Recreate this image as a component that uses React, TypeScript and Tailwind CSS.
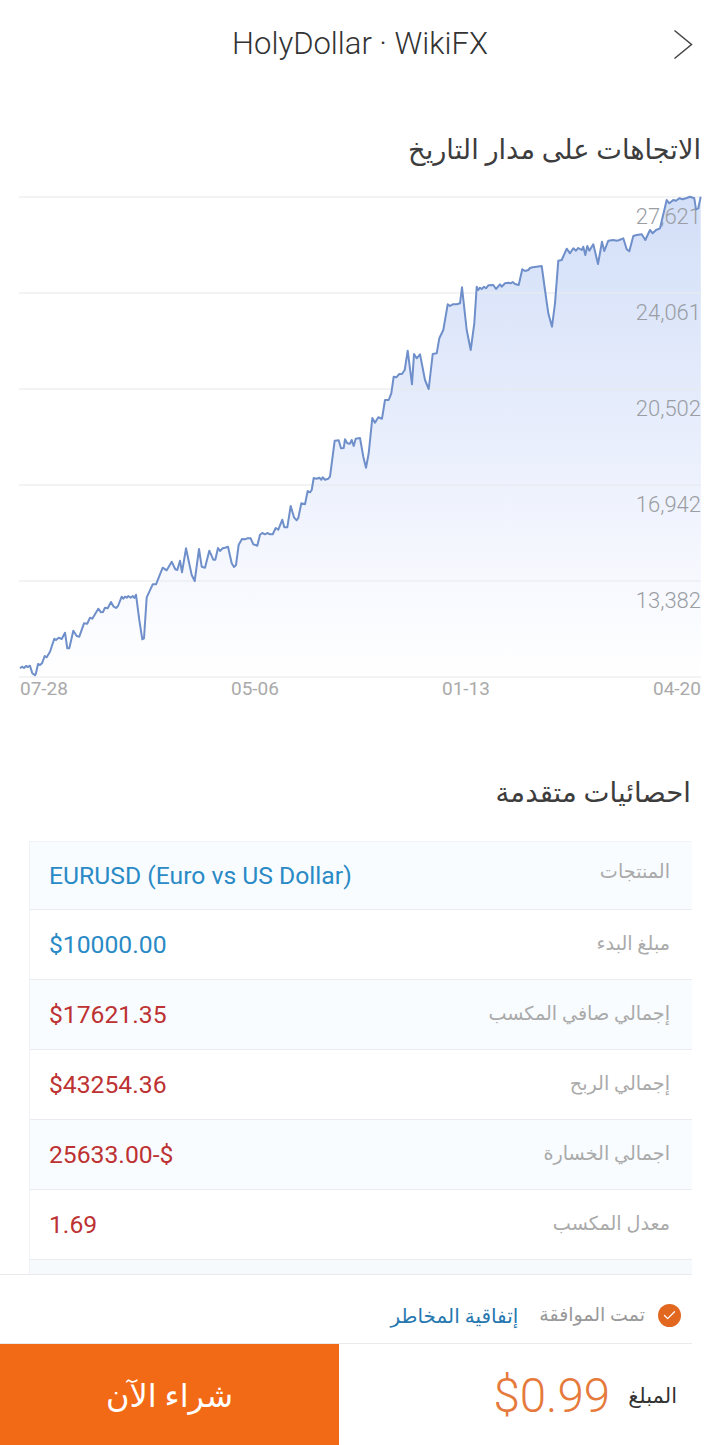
import { Check } from 'lucide-react'

// chart line traced from the picture, three crops at 3x
const crop1 = [[60,685],[66,680],[72,684],[78,678],[84,681],[90,677],[97,700],[105,706],[108,700],[114,672],[120,675],[126,670],[134,648],[140,652],[150,635],[163,596],[168,600],[176,593],[185,597],[195,578],[202,625],[208,625],[220,572],[230,588],[238,590],[252,550],[262,551],[270,533],[277,536],[295,506],[303,517],[309,516],[315,503],[323,505],[333,486],[341,500],[348,504],[354,498],[365,470],[370,476],[375,470],[380,473],[385,468],[392,473],[398,468],[403,474],[408,464],[418,540],[427,598],[432,595],[440,472],[458,433],[468,433],[488,383],[500,391],[515,365],[526,388],[532,390],[540,362],[546,397],[558,325],[575,405],[584,423],[597,327],[605,380],[615,383],[628,332],[640,359],[646,359],[654,324],[660,333],[668,325],[675,323],[684,320],[695,370],[702,381],[708,375],[716,314],[726,297],[735,298],[742,295],[752,295],[760,313],[772,317],[780,284],[787,279],[795,283],[802,279],[810,283],[818,283],[827,264],[835,269],[847,239],[853,262],[862,262],[872,198],[882,232],[890,241],[895,234],[904,190],[915,193],[923,153],[930,157],[935,150],[941,114],[950,116],[958,113],[964,119],[968,112],[975,119],[985,116],[990,110]]
const crop2 = [[134,242],[146,241],[153,265],[161,264],[165,238],[172,250],[180,251],[185,240],[191,258],[197,236],[210,234],[220,290],[228,323],[236,280],[247,174],[255,188],[265,172],[276,176],[285,120],[296,120],[304,100],[311,50],[319,52],[328,42]]
const crop3 = [[126,552],[134,540],[143,482],[156,583],[162,492],[170,505],[180,493],[195,570],[206,597],[218,492],[230,490],[238,445],[250,420],[263,343],[270,348],[278,343],[290,343],[300,340],[306,292],[320,420],[332,480],[343,400],[350,290],[355,300],[360,293],[365,297],[372,290],[378,295],[385,286],[400,285],[408,297],[420,283],[425,290],[435,280],[445,278],[452,280],[458,276],[465,282],[476,285],[487,238],[495,243],[505,240],[510,234],[518,232],[530,230],[545,228],[555,300],[565,370],[576,410],[585,340],[595,212],[605,210],[620,176],[630,190],[640,175],[648,182],[655,174],[665,180],[670,170],[676,195],[682,168],[688,182],[700,163],[714,222],[726,155],[733,183],[745,152],[760,150],[770,152],[778,150],[790,145],[800,178],[808,184],[820,138],[830,135],[845,133],[856,150],[870,120],[878,130],[888,120],[900,115],[920,30],[928,40],[940,30],[948,32],[958,25],[968,28],[980,24],[990,20],[1003,25],[1008,58],[1015,55],[1022,20]]

const points = [
  ...crop1.map(([x, y]) => [x / 3, 440 + y / 3]),
  ...crop2.map(([x, y]) => [290 + x / 3, 360 + y / 3]),
  ...crop3.map(([x, y]) => [360 + x / 3, 190 + y / 3]),
]
const linePath = points.map(([x, y]) => `${x.toFixed(1)},${y.toFixed(1)}`).join(' ')
const areaPath = `20,677 ${linePath} 701,677`

const gridLines = [197, 293, 389, 485, 581, 677]
const yLabels = [
  { y: 224, text: '27,621' },
  { y: 320, text: '24,061' },
  { y: 416, text: '20,502' },
  { y: 512, text: '16,942' },
  { y: 608, text: '13,382' },
]

const rows = [
  { label: 'المنتجات', value: 'EURUSD (Euro vs US Dollar)', color: 'text-[#2a8ac6]', bg: 'bg-[#f8fcff]', h: 'h-[68px]', labelCls: 'mb-[7px]' },
  { label: 'مبلغ البدء', value: '$10000.00', color: 'text-[#2a8ac6]', bg: 'bg-white', h: 'h-[70px]', labelCls: '' },
  { label: 'إجمالي صافي المكسب', value: '$17621.35', color: 'text-[#bd3232]', bg: 'bg-[#f8fcff]', h: 'h-[70px]', labelCls: '' },
  { label: 'إجمالي الربح', value: '$43254.36', color: 'text-[#bd3232]', bg: 'bg-white', h: 'h-[70px]', labelCls: '' },
  { label: 'اجمالي الخسارة', value: '25633.00-$', color: 'text-[#bd3232]', bg: 'bg-[#f8fcff]', h: 'h-[70px]', labelCls: '' },
  { label: 'معدل المكسب', value: '1.69', color: 'text-[#bd3232]', bg: 'bg-white', h: 'h-[70px]', labelCls: '' },
]

function Chart() {
  return (
    <svg width="720" height="490" viewBox="0 190 720 490" className="block">
      <defs>
        <linearGradient id="area" gradientUnits="userSpaceOnUse" x1="0" y1="197" x2="0" y2="677">
          <stop offset="0" stopColor="#d3dff8" />
          <stop offset="0.5" stopColor="#e8eefc" />
          <stop offset="0.75" stopColor="#f5f7fe" />
          <stop offset="1" stopColor="#ffffff" />
        </linearGradient>
      </defs>
      <polygon points={areaPath} fill="url(#area)" />
      {gridLines.map((y) => (
        <line key={y} x1="19" x2="701" y1={y} y2={y} stroke="#e9ebef" strokeOpacity="0.8" strokeWidth="1.5" />
      ))}
      {yLabels.map((l) => (
        <text key={l.text} x="701" y={l.y} textAnchor="end" fill="#9a9da3" className="text-[22px] font-light">
          {l.text}
        </text>
      ))}
      <polyline points={linePath} fill="none" stroke="#6f8fca" strokeWidth="2" strokeLinejoin="round" />
    </svg>
  )
}

export default function App() {
  return (
    <div className="w-[720px] h-[1445px] flex flex-col overflow-hidden bg-white font-['Roboto','DejaVu_Sans',sans-serif]">
      <div className="flex-1 min-h-0 overflow-hidden">
        <div className="relative h-[86px] pt-[2px] flex items-center justify-center">
          <span className="text-[31px] font-light text-[#333]">HolyDollar · WikiFX</span>
          <svg className="absolute left-[673px] top-[29px]" width="20" height="31" viewBox="0 0 20 31" fill="none">
            <path d="M1.5 1.5 L18.5 15.5 L1.5 29.5" stroke="#444" strokeWidth="1.5" />
          </svg>
        </div>

        <h2 dir="rtl" className="mt-[44px] h-[40px] pr-[19px] text-[27.2px] leading-[40px] text-[#3d3d3d]">
          الاتجاهات على مدار التاريخ
        </h2>

        <div className="mt-[20px]">
          <Chart />
        </div>
        <div className="flex justify-between pl-[20px] pr-[19px] text-[19px] leading-[17px] text-[#aaa]">
          <span>07-28</span>
          <span>05-06</span>
          <span>01-13</span>
          <span>04-20</span>
        </div>

        <h2 dir="rtl" className="mt-[76px] h-[40px] pr-[29px] text-[27.6px] leading-[40px] text-[#3d3d3d]">
          احصائيات متقدمة
        </h2>

        <div className="mt-[28px] ml-[29px] w-[663px] border-l border-t border-[#f1f3f6]">
          {rows.map((r) => (
            <div
              key={r.label}
              className={`${r.h} ${r.bg} flex items-center justify-between pl-[19px] pr-[22px] border-b border-[#e9edf1] text-[24.7px]`}
            >
              <span className={r.color}>{r.value}</span>
              <span dir="rtl" className={`${r.labelCls} text-[19.2px] text-[#aaa]`}>{r.label}</span>
            </div>
          ))}
          <div className="h-[20px] bg-[#f7fafc]" />
        </div>
      </div>

      <div className="h-[171px] shrink-0 flex flex-col bg-white">
        <div className="h-[70px] mr-[28px] pt-[13px] border-y border-[#e8eaed] flex items-center justify-end pr-[11px] gap-[13px]">
          <span dir="rtl" className="text-[20px] text-[#2878b0]">إتفاقية المخاطر</span>
          <span dir="rtl" className="ml-[8px] text-[19px] text-[#999]">تمت الموافقة</span>
          <span className="w-[23px] h-[23px] rounded-full bg-[#e2681f] flex items-center justify-center">
            <Check className="w-[15px] h-[15px] text-white" strokeWidth={2} />
          </span>
        </div>
        <div className="flex-1 flex">
          <div dir="rtl" className="w-[339px] pt-[3px] bg-[#f36a16] flex items-center justify-center text-[32px] text-white">
            شراء الآن
          </div>
          <div className="flex-1 pt-[5px] flex items-center justify-end pr-[43px] gap-[18px]">
            <span className="text-[47.5px] font-light text-[#e57a3c]">$0.99</span>
            <span dir="rtl" className="text-[21px] text-[#333]">المبلغ</span>
          </div>
        </div>
      </div>
    </div>
  )
}
